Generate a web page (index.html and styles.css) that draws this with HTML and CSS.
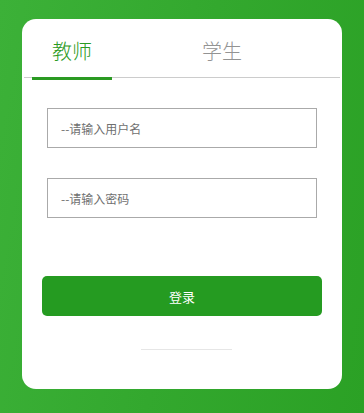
FILE: index.html
```html
<!DOCTYPE html>
<html lang="zh">
<head>
<meta charset="utf-8">
<title>登录</title>
<link rel="stylesheet" href="styles.css">
</head>
<body>
<div class="card">
  <div class="tabs">
    <div class="tab active">教师<span class="bar"></span></div>
    <div class="tab">学生</div>
  </div>
  <form class="form">
    <input class="field" type="text" placeholder="--请输入用户名">
    <input class="field" type="password" placeholder="--请输入密码">
    <button class="btn" type="button">登录</button>
    <div class="rule"></div>
  </form>
</div>
</body>
</html>
```
FILE: styles.css
```css
html, body {
  margin: 0;
  height: 100%;
}
body {
  background: linear-gradient(100deg, #3cb138 0%, #33a82e 50%, #2ba125 100%);
  padding: 19px 22px;
  box-sizing: border-box;
  font-family: "Noto Sans CJK SC", "Noto Sans", sans-serif;
}
.card {
  width: 320px;
  height: 370px;
  box-sizing: border-box;
  background: #fff;
  border-radius: 14px;
  padding: 0 2px;
}
.tabs {
  display: flex;
  gap: 70px;
  padding-left: 8px;
  border-bottom: 1px solid #cccccc;
}
.tab {
  position: relative;
  width: 80px;
  text-align: center;
  font-size: 20px;
  font-weight: 300;
  line-height: 20px;
  padding: 22px 0 16px;
  color: #939393;
}
.tab.active {
  color: #2a9a22;
}
.bar {
  position: absolute;
  left: 0;
  right: 0;
  bottom: -3px;
  height: 3px;
  background: #2a9a22;
}
.form {
  display: flex;
  flex-direction: column;
  margin: 0;
  padding-top: 30px;
}
.field {
  width: 270px;
  height: 40px;
  box-sizing: border-box;
  margin: 0 0 30px 23px;
  border: 1px solid #aaaaaa;
  padding: 0 13px;
  font-family: "Noto Sans CJK SC", "Noto Sans", sans-serif;
  font-size: 12px;
  color: #333;
  outline: none;
  border-radius: 0;
}
.field::placeholder {
  color: #6f6f6f;
}
.btn {
  width: 280px;
  height: 40px;
  margin: 28px 0 0 18px;
  border: none;
  border-radius: 5px;
  background: #259b21;
  color: #fff;
  font-family: "Noto Sans CJK SC", "Noto Sans", sans-serif;
  font-size: 13px;
  padding: 0;
}
.rule {
  width: 91px;
  height: 1px;
  margin: 33px 0 0 117px;
  background: #e6e6e6;
}
```
